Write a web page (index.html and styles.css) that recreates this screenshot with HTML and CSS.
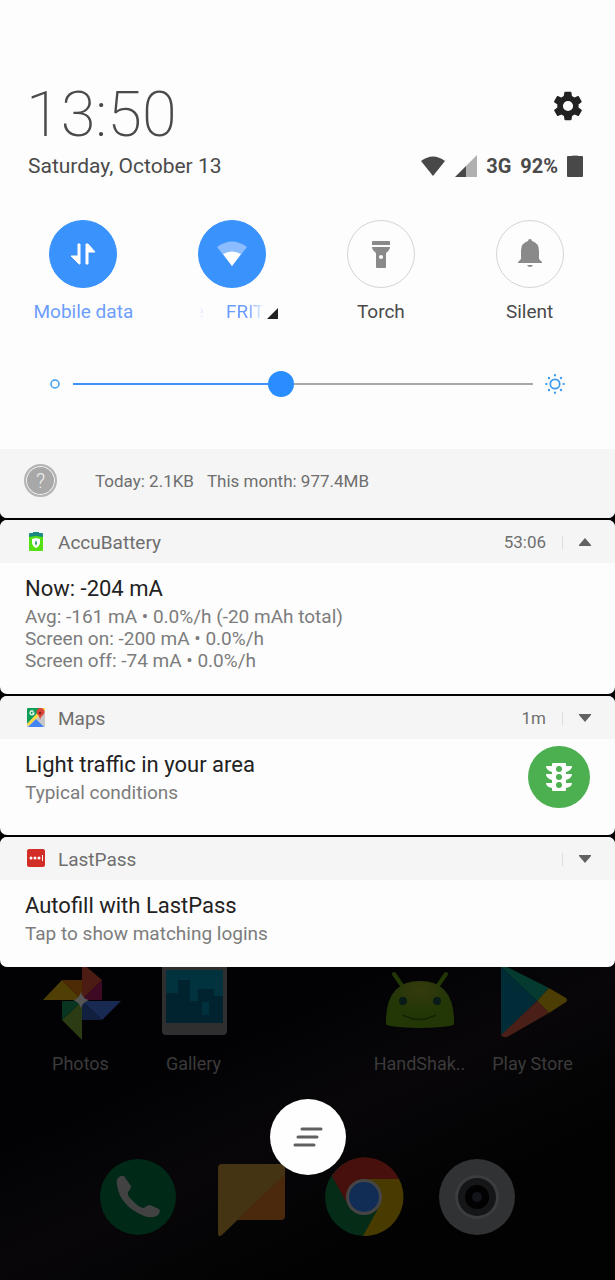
FILE: index.html
```html
<!DOCTYPE html>
<html lang="en">
<head>
    <meta charset="utf-8">
    <meta name="viewport" content="width=device-width, initial-scale=1">
    <title>Notifications</title>
    <link rel="stylesheet" href="styles.css">
</head>
<body>
    <header class="panel">
        <div class="top-row">
            <time class="clock">13:50</time>
            <button class="icon-button settings" aria-label="Settings">
                <svg width="34" height="34" viewBox="0 0 24 24"><path fill="#222" d="M19.4 13c0-.3.1-.6.1-1s0-.7-.1-1l2.1-1.7c.2-.1.2-.4.1-.6l-2-3.5c-.1-.2-.4-.3-.6-.2l-2.500 1c-.5-.4-1.100-.7-1.700-1l-.4-2.600c0-.2-.2-.4-.5-.4h-4c-.2 0-.4.2-.5.4l-.4 2.600c-.6.3-1.200.6-1.700 1l-2.500-1c-.2-.1-.5 0-.6.2l-2 3.500c-.1.2-.1.5.1.6L4.500 11c0 .3-.1.6-.1 1s0 .7.1 1l-2.100 1.700c-.2.100-.2.400-.1.600l2 3.500c.1.2.4.3.6.2l2.500-1c.5.4 1.100.7 1.700 1l.4 2.600c0 .2.2.4.5.4h4c.2 0 .4-.2.500-.4l.4-2.600c.6-.3 1.200-.6 1.700-1l2.500 1c.2.100.5 0 .6-.2l2-3.500c.1-.2.1-.5-.1-.6L19.400 13zM12 15.600a3.600 3.600 0 1 1 0-7.200 3.600 3.600 0 0 1 0 7.200z"/></svg>
            </button>
        </div>
        <div class="status-row">
            <span class="date">Saturday, October 13</span>
            <div class="status">
                <svg width="26" height="20" viewBox="0 0 26 20"><path fill="#484848" d="M1 5Q13-4 25 5L13 20z"/></svg>
                <svg width="22" height="22" viewBox="0 0 22 22"><path fill="#b0b0b0" d="M22 0v22H11V11z"/><path fill="#484848" d="M11 11v11H0z"/></svg>
                <span>3G</span>
                <span>92%</span>
                <svg width="16" height="22" viewBox="0 0 16 22"><path fill="#bbb" d="M5 0h6v2H5z"/><rect y="1" width="16" height="21" rx="1" fill="#484848"/></svg>
            </div>
        </div>

        <div class="tiles">
            <button class="tile on">
                <span class="disc">
                    <svg width="34" height="34" viewBox="0 0 34 34"><path fill="#fff" stroke="#fff" stroke-width="1" stroke-linejoin="round" d="M12 7h2v20h-1l-8-8h7zM20 27h2V15h7l-7-8h-2z"/></svg>
                </span>
                <span>Mobile data</span>
            </button>
            <button class="tile on">
                <span class="disc">
                    <svg width="34" height="34" viewBox="0 0 34 34"><path fill="#8abcff" d="M2 10Q17-1 32 10L17 29z"/><path fill="#fff" d="M8 17Q17 12 26 17L17 29z"/></svg>
                </span>
                <span class="network"><span class="ticker"><span>e</span><span>FRIT</span></span><svg width="11" height="11" viewBox="0 0 11 11"><path fill="#222" d="M11 0v11H0z"/></svg></span>
            </button>
            <button class="tile">
                <span class="disc">
                    <svg width="34" height="34" viewBox="0 0 34 34"><path fill="#8a8a8a" d="M9 4h16q1 0 1 1v3H8V5q0-1 1-1zM8 10h18q0 3-4 6v14q0 1-1 1h-8q-1 0-1-1V16q-4-3-4-6z"/><circle cx="17" cy="20" r="2" fill="#fff"/></svg>
                </span>
                <span>Torch</span>
            </button>
            <button class="tile">
                <span class="disc">
                    <svg width="34" height="34" viewBox="0 0 34 34"><path fill="#8a8a8a" d="M15 4a2 2 0 0 1 4 0q7 2 7 10v8l3 3v1H5v-1l3-3v-8q0-8 7-10zM14 28h6q-1 2-3 2t-3-2z"/></svg>
                </span>
                <span>Silent</span>
            </button>
        </div>

        <div class="brightness">
            <svg width="12" height="12" viewBox="0 0 12 12"><circle cx="6" cy="6" r="4" fill="none" stroke="#3a9bee" stroke-width="1.500"/></svg>
            <input type="range" min="0" max="100" value="45" aria-label="Brightness">
            <svg width="20" height="20" viewBox="0 0 20 20"><g fill="none" stroke="#3a9bee" stroke-linecap="round"><circle cx="10" cy="10" r="4.700" stroke-width="1.700"/><path stroke-width="2.200" d="M10 1.200v.3M10 18.500v.3M1.200 10h.3M18.500 10h.3M3.900 3.900l.2.200M15.900 15.900l.2.200M3.900 16.100l.2-.2M15.900 4.100l.2-.2"/></g></svg>
        </div>

        <div class="data-usage">
            <span class="help">?</span>
            <span>Today: 2.1KB</span>
            <span>This month: 977.4MB</span>
        </div>
    </header>

    <main class="notifications">
        <article class="card">
            <div class="card-header">
                <svg width="20" height="20" viewBox="0 0 20 20"><rect x="3" y="2" width="14" height="17" rx="1" fill="#55e010"/><path fill="#1a8a80" d="M4 1h3V0h6v1h3q1 0 1 1v3l-7-1-7 1V2q0-1 1-1z"/><path fill="#fff" d="M6 7l4-1 4 1v3q0 4-4 6-4-2-4-6z"/><path fill="#208a60" d="M10 8l1 3-1 3-1-3z"/></svg>
                <span class="app-name">AccuBattery</span>
                <span class="when">53:06</span>
                <button class="icon-button expand" aria-label="Collapse AccuBattery">
                    <svg width="12" height="8" viewBox="0 0 12 8"><path fill="#616161" d="M6 0l6 7v1H0V7z"/></svg>
                </button>
            </div>
            <div class="card-body">
                <div class="text">
                    <h2>Now: -204 mA</h2>
                    <p>Avg: -161 mA • 0.0%/h (-20 mAh total)</p>
                    <p>Screen on: -200 mA • 0.0%/h</p>
                    <p>Screen off: -74 mA • 0.0%/h</p>
                </div>
            </div>
        </article>

        <article class="card">
            <div class="card-header">
                <svg width="20" height="20" viewBox="0 0 20 20"><rect x="1" y="0" width="18" height="19" rx="1" fill="#c8c8c8"/><path fill="#109d58" d="M2 0h15L1 16V1q0-1 1-1z"/><path fill="#ffd84a" d="M16 0h3v2L3 18l-2-2z"/><path fill="#4286f5" d="M2 19l8-8 8 8z"/><path fill="#dc4437" d="M14 12q0-3-2-5a4 4 0 1 1 5 0q-3 2-3 5z"/><circle cx="14" cy="5" r="1.300" fill="#7b231e"/><path fill="none" stroke="#fff" stroke-width="1.200" d="M7.500 3.500a2 2 0 1 0 .5 1.500H6"/></svg>
                <span class="app-name">Maps</span>
                <span class="when">1m</span>
                <button class="icon-button expand" aria-label="Expand Maps">
                    <svg width="12" height="8" viewBox="0 0 12 8"><path fill="#616161" d="M0 0h12v1L6 8 0 1z"/></svg>
                </button>
            </div>
            <div class="card-body">
                <div class="text">
                    <h2>Light traffic in your area</h2>
                    <p>Typical conditions</p>
                </div>
                <div class="traffic">
                    <svg width="26" height="28" viewBox="0 0 26 28"><path fill="#fff" d="M7 0h12q1 0 1 1v2h6q0 4-6 6v2h6q0 4-6 6v3h6q0 4-6 5v2q0 1-1 1H7q-1 0-1-1v-2q-6-1-6-5h6v-3q-6-2-6-6h6V9Q0 7 0 3h6V1q0-1 1-1z"/><g fill="#4caf50"><circle cx="13" cy="6" r="3"/><circle cx="13" cy="14" r="3"/><circle cx="13" cy="22" r="3"/></g></svg>
                </div>
            </div>
        </article>

        <article class="card">
            <div class="card-header">
                <svg width="20" height="20" viewBox="0 0 20 20"><rect x="1" y="0" width="18" height="18" rx="2" fill="#d32d27"/><g fill="#fff"><circle cx="5" cy="9" r="1.500"/><circle cx="9" cy="9" r="1.500"/><circle cx="13" cy="9" r="1.500"/><path d="M16 6h1v6h-1z"/></g></svg>
                <span class="app-name">LastPass</span>
                <span class="when"></span>
                <button class="icon-button expand" aria-label="Expand LastPass">
                    <svg width="12" height="8" viewBox="0 0 12 8"><path fill="#616161" d="M0 0h12v1L6 8 0 1z"/></svg>
                </button>
            </div>
            <div class="card-body">
                <div class="text">
                    <h2>Autofill with LastPass</h2>
                    <p>Tap to show matching logins</p>
                </div>
            </div>
        </article>
    </main>

    <section class="home">
        <nav class="apps">
            <a href="#photos">
                <svg width="80" height="76" viewBox="0 0 80 76"><path fill="#4b1b14" d="M41 33V-4l20 17z"/><path fill="#3e0a23" d="M41 33l20-20v20z"/><path fill="#182a51" d="M41 34h39L61 53z"/><path fill="#12203f" d="M41 34l20 19H41z"/><path fill="#2b3b14" d="M41 73V34L21 53z"/><path fill="#08351f" d="M21 34h20L21 53z"/><path fill="#503f04" d="M2 33l19-20 20 20z"/><path fill="#4f2b05" d="M21 13h20v20z"/><path fill="#555" d="M40 25q2 7 8 8-6 2-8 8-2-6-8-8 6-1 8-8z"/></svg>
                <span>Photos</span>
            </a>
            <a href="#gallery">
                <svg width="80" height="76" viewBox="0 0 80 76"><rect x="8" y="-4" width="65" height="72" rx="4" fill="#2f2f30"/><rect x="12" y="3" width="57" height="53" rx="1" fill="#00333d"/><path fill="#00232f" d="M12 26h12V13h12v21h8V22h16v7h9v27H12z"/><path fill="#00303e" d="M48 35h7v13h-7z"/></svg>
                <span>Gallery</span>
            </a>
            <a href="#handshaker" class="col-4">
                <svg width="80" height="76" viewBox="0 0 80 76"><defs><radialGradient id="head" cy=".2"><stop offset="0" stop-color="#353a0c"/><stop offset="1" stop-color="#223606"/></radialGradient></defs><path stroke="#223606" stroke-width="4" stroke-linecap="round" d="M14 7l9 13M66 7l-9 13"/><path fill="url(#head)" d="M6 57Q5 14 40 14t34 43q0 3-34 4Q6 60 6 57z"/><g fill="#091a18"><circle cx="23" cy="34" r="4"/><circle cx="57" cy="34" r="4"/></g><path fill="none" stroke="#142303" stroke-width="1.500" d="M23 48q16 9 33 0"/></svg>
                <span>HandShak..</span>
            </a>
            <a href="#play">
                <svg width="80" height="76" viewBox="0 0 80 76"><path fill="#002c38" d="M8 0l36 34L8 69z"/><path fill="#053a31" d="M8 0h6l42 21-12 13z"/><path fill="#4b3d04" d="M56 21l17 10q2 2 0 4L56 46 44 34z"/><path fill="#491f18" d="M44 34l12 12-42 24q-4 1-6-2z"/></svg>
                <span>Play Store</span>
            </a>
        </nav>

        <nav class="dock">
            <a href="#phone" aria-label="Phone">
                <svg width="80" height="80" viewBox="0 0 80 80"><circle cx="40" cy="40" r="38" fill="#002a17"/><path fill="#424242" d="M20 21q3-3 5-2 2 0 3 3l5 7q0 3-3 6-1 4 4 8 6 7 12 8 3-3 6-3l9 4q2 2-1 6-5 4-14 1Q22 49 19 28q-1-5 1-7z"/></svg>
            </a>
            <a href="#messages" aria-label="Messages">
                <svg width="80" height="80" viewBox="0 0 80 80"><path fill="#4b290c" d="M74 16v43q0 4-4 4H26z"/><path fill="#443413" d="M11 7h59q4 0 4 4v6L11 78q-4 3-4-2V11q0-4 4-4z"/></svg>
            </a>
            <a href="#chrome" aria-label="Chrome">
                <svg width="80" height="80" viewBox="0 0 80 80"><circle cx="40" cy="40" r="39" fill="#052c17"/><path fill="#47100d" d="M8 19A38 38 0 0 1 75 22H40L24 48z"/><path fill="#493a00" d="M40 22h35a39 39 0 0 1-36 57l17-31z"/><circle cx="40" cy="40" r="18" fill="#454545"/><circle cx="40" cy="40" r="15" fill="#122d55"/></svg>
            </a>
            <a href="#camera" aria-label="Camera">
                <svg width="80" height="80" viewBox="0 0 80 80"><circle cx="40" cy="40" r="38" fill="#303234"/><circle cx="40" cy="40" r="22" fill="#3d3d3d"/><circle cx="40" cy="40" r="19" fill="#151618"/><circle cx="40" cy="40" r="12" fill="#020203"/><circle cx="40" cy="40" r="5" fill="#13131b"/></svg>
            </a>
        </nav>

        <button class="clear-all" aria-label="Clear all notifications">
            <svg width="30" height="22" viewBox="0 0 30 22"><path stroke="#606060" stroke-width="3" stroke-linecap="round" d="M9 3h19M5 11h19M2 19h19"/></svg>
        </button>
    </section>
</body>
</html>
```
FILE: styles.css
```css
* {
    box-sizing: border-box;
}
body {
    display: flex;
    flex-direction: column;
    min-height: 100vh;
    margin: 0;
    font-family: Roboto, sans-serif;
    font-size: 19px;
    color: #4a4a4a;
    background: #020204;
}
button {
    padding: 0;
    border: none;
    background: none;
    font: inherit;
    color: inherit;
    cursor: pointer;
}
a {
    color: inherit;
    text-decoration: none;
}
svg {
    display: block;
    flex-shrink: 0;
}
.icon-button {
    display: flex;
    align-items: center;
    justify-content: center;
}

/* quick settings */
.panel {
    padding-top: 80px;
    background: #fdfdfd;
    border-radius: 0 0 7px 7px;
    overflow: hidden;
}
.top-row,
.status-row {
    display: flex;
    justify-content: space-between;
    padding: 0 32px 0 28px;
}
.top-row {
    padding-left: 26px;
}
.clock {
    font-size: 63px;
    line-height: 70px;
    height: 68px;
    font-weight: 200;
}
.settings {
    height: 52px;
    margin-right: -2px;
}
.status-row {
    align-items: center;
    height: 36px;
}
.date {
    font-size: 21px;
}
.status {
    display: flex;
    align-items: center;
    gap: 9px;
    font-size: 20px;
    font-weight: 700;
}
.tiles {
    display: grid;
    grid-template-columns: repeat(4, 1fr);
    margin-top: 36px;
    padding: 0 11px 0 9px;
}
.tile {
    display: flex;
    flex-direction: column;
    align-items: center;
    gap: 12px;
    line-height: 24px;
}
.disc {
    display: flex;
    align-items: center;
    justify-content: center;
    width: 68px;
    height: 68px;
    border: 1px solid #d4d4d4;
    border-radius: 50%;
}
.tile.on {
    color: #6c9dfc;
}
.tile.on .disc {
    border-color: #3a93fc;
    background: #3a93fc;
}
.network {
    display: flex;
    align-items: center;
    gap: 3px;
    padding-left: 8px;
}
.network svg {
    margin-top: 3px;
}
.ticker {
    display: flex;
    gap: 22px;
    -webkit-mask-image: linear-gradient(to right, transparent 6%, #000 45%, #000 75%, transparent);
    mask-image: linear-gradient(to right, transparent 6%, #000 45%, #000 75%, transparent);
}
.brightness {
    display: flex;
    align-items: center;
    gap: 12px;
    margin: 44px 50px 0 49px;
    height: 32px;
}
.brightness input {
    flex: 1;
    min-width: 0;
    height: 28px;
    margin: 0;
    appearance: none;
    background: linear-gradient(to right, #3f8ffc 45%, #a8a8a8 45%) center / 100% 2px no-repeat;
}
.brightness input::-webkit-slider-thumb {
    appearance: none;
    width: 26px;
    height: 26px;
    border-radius: 50%;
    background: #298dff;
}
.data-usage {
    display: flex;
    align-items: center;
    gap: 13px;
    height: 69px;
    margin-top: 49px;
    padding: 0 24px 6px;
    font-size: 17px;
    color: #6e6e6e;
    background: #f5f5f5;
}
.help {
    width: 33px;
    height: 33px;
    margin-right: 25px;
    border: 2px solid #b4b4b4;
    border-radius: 50%;
    box-shadow: inset 0 0 0 1px #f5f5f5;
    background: #a8a8a8;
    color: #f0f0f0;
    font-size: 20px;
    font-weight: 300;
    line-height: 30px;
    text-align: center;
}

/* notification cards */
.notifications {
    display: grid;
    gap: 2px;
    padding-top: 2px;
}
.card {
    border-radius: 7px;
    background: #fdfdfd;
    overflow: hidden;
}
.card-header {
    display: flex;
    align-items: center;
    height: 43px;
    padding: 1px 24px 0 26px;
    color: #6e6e6e;
    background: #f5f5f5;
}
.app-name {
    flex: 1;
    margin-left: 12px;
}
.when {
    margin-right: 16px;
    font-size: 17px;
}
.expand {
    width: 29px;
    height: 13px;
    justify-content: flex-end;
    border-left: 1px solid #dedede;
}
.card-body {
    display: flex;
    align-items: flex-start;
    justify-content: space-between;
    padding: 11px 25px 22px;
}
.card-body h2 {
    margin: 0 0 3px;
    font-size: 22px;
    font-weight: 400;
    line-height: 29px;
    color: #222;
}
.card-body p {
    margin: 0;
    line-height: 22px;
    color: #7c7c7c;
}
.traffic {
    display: flex;
    align-items: center;
    justify-content: center;
    width: 62px;
    height: 62px;
    margin: -4px 0 5px;
    border-radius: 50%;
    background: #4caf50;
}

/* dimmed home screen */
.home {
    position: relative;
    display: flex;
    flex: 1;
    flex-direction: column;
    justify-content: space-between;
    padding-bottom: 43px;
    color: #3b3b3b;
    background: linear-gradient(155deg, #020204 30%, #080608 50%, #020203 75%);
}
.apps {
    display: grid;
    grid-template-columns: repeat(5, 1fr);
    padding: 0 26px 0 24px;
}
.apps a {
    display: flex;
    flex-direction: column;
    align-items: center;
    gap: 9px;
    font-size: 18px;
    line-height: 24px;
}
.apps .col-4 {
    grid-column: 4;
}
.dock {
    display: grid;
    grid-template-columns: repeat(4, 1fr);
    justify-items: center;
    padding: 0 82px;
}
.clear-all {
    position: absolute;
    bottom: 105px;
    left: calc(50% - 38px);
    display: flex;
    align-items: center;
    justify-content: center;
    width: 76px;
    height: 76px;
    border-radius: 50%;
    background: #fefefe;
}
```
